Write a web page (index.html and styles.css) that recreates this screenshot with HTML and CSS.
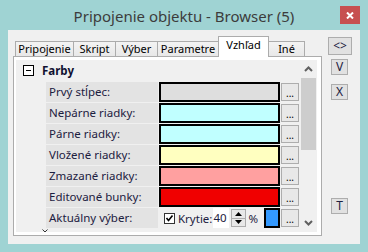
FILE: index.html
```html
<!DOCTYPE html>
<html>
<head>
<meta charset="utf-8">
<link rel="stylesheet" href="styles.css">
</head>
<body>
<div class="window">
  <div class="titlebar">
    <span class="title">Pripojenie objektu - Browser (5)</span>
    <div class="close">
      <svg width="8" height="7" viewBox="0 0 8 7"><path d="M1 0.5 L7 6.5 M7 0.5 L1 6.5" stroke="#fff" stroke-width="2"/></svg>
    </div>
  </div>
  <div class="client">
    <div class="tabctl">
      <div class="tabstrip">
        <div class="tab w1">Pripojenie</div>
        <div class="tab w2">Skript</div>
        <div class="tab w3">Výber</div>
        <div class="tab w4">Parametre</div>
        <div class="tab active w5">Vzhľad</div>
        <div class="tab w6">Iné</div>
      </div>
      <div class="page">
        <div class="grid">
          <div class="cat">
            <span class="minus"><svg width="9" height="9" viewBox="0 0 9 9"><path d="M2 4.5 H7" stroke="#000" stroke-width="1"/></svg></span>
            <span class="cat-name">Farby</span>
          </div>
          <div class="row">
            <div class="label">Prvý stĺpec:</div>
            <div class="value"><div class="swatch c-gray"></div><div class="dots">...</div></div>
          </div>
          <div class="row">
            <div class="label">Nepárne riadky:</div>
            <div class="value"><div class="swatch c-cyan"></div><div class="dots">...</div></div>
          </div>
          <div class="row">
            <div class="label">Párne riadky:</div>
            <div class="value"><div class="swatch c-cyan"></div><div class="dots">...</div></div>
          </div>
          <div class="row">
            <div class="label">Vložené riadky:</div>
            <div class="value"><div class="swatch c-yellow"></div><div class="dots">...</div></div>
          </div>
          <div class="row">
            <div class="label">Zmazané riadky:</div>
            <div class="value"><div class="swatch c-pink"></div><div class="dots">...</div></div>
          </div>
          <div class="row">
            <div class="label">Editované bunky:</div>
            <div class="value"><div class="swatch c-red"></div><div class="dots">...</div></div>
          </div>
          <div class="row">
            <div class="label">Aktuálny výber:</div>
            <div class="value sel">
              <span class="check"><svg width="9" height="9" viewBox="0 0 9 9"><path d="M1.5 4 L3.5 6.5 L7.5 1.5" stroke="#000" stroke-width="1.6" fill="none"/></svg></span>
              <span class="kry">Krytie:</span>
              <span class="num">40</span>
              <span class="spin">
                <span class="sp"><svg width="7" height="4" viewBox="0 0 7 4"><path d="M0 4 L3.5 0 L7 4 Z" fill="#000"/></svg></span>
                <span class="sp"><svg width="7" height="4" viewBox="0 0 7 4"><path d="M0 0 L3.5 4 L7 0 Z" fill="#000"/></svg></span>
              </span>
              <span class="pct">%</span>
              <div class="swatch small c-blue"></div>
              <div class="dots">...</div>
            </div>
          </div>
          <div class="partial">
            <svg width="6" height="4" viewBox="0 0 6 4"><path d="M0.5 0.5 L3 3 L5.5 0.5" stroke="#333" stroke-width="1" fill="none"/></svg>
          </div>
        </div>
        <div class="scrollbar">
          <div class="arrow"><svg width="9" height="6" viewBox="0 0 9 6"><path d="M1 5 L4.5 1.5 L8 5" stroke="#606060" stroke-width="2" fill="none"/></svg></div>
          <div class="thumb"></div>
          <div class="track"></div>
          <div class="arrow down"><svg width="9" height="6" viewBox="0 0 9 6"><path d="M1 1 L4.5 4.5 L8 1" stroke="#606060" stroke-width="2" fill="none"/></svg></div>
        </div>
      </div>
    </div>
    <div class="side">
      <div class="btn wide">&lt;&gt;</div>
      <div class="btn b-v">V</div>
      <div class="btn b-x">X</div>
      <div class="btn b-t">T</div>
    </div>
  </div>
</div>
</body>
</html>
```

FILE: styles.css
```css
html, body {
  margin: 0;
  padding: 0;
}
body {
  width: 368px;
  height: 252px;
  overflow: hidden;
  background: #9fd3d3;
  font-family: "Noto Sans", "DejaVu Sans", sans-serif;
  color: #000;
}
.window {
  width: 368px;
  height: 252px;
  box-sizing: border-box;
  padding: 0 8px 8px 8px;
  display: flex;
  flex-direction: column;
}
.titlebar {
  height: 30px;
  flex: none;
  position: relative;
  display: flex;
  align-items: center;
  justify-content: center;
}
.title {
  font-size: 15px;
  color: #3c3c3c;
  margin-top: 2px;
}
.close {
  position: absolute;
  right: 0;
  top: 6px;
  width: 20px;
  height: 18px;
  background: #c75050;
  display: flex;
  align-items: center;
  justify-content: center;
}
.client {
  flex: 1;
  background: #f0f0f0;
  display: flex;
}
.tabctl {
  margin-left: 5px;
  width: 309px;
  padding-top: 6px;
  display: flex;
  flex-direction: column;
}
.tabstrip {
  height: 20px;
  display: flex;
  align-items: flex-end;
  padding-left: 2px;
  position: relative;
  z-index: 1;
}
.tab {
  box-sizing: border-box;
  height: 15px;
  border: 1px solid #acacac;
  border-bottom: none;
  margin-left: -1px;
  background: linear-gradient(#f3f3f3, #e8e8e8);
  font-size: 11px;
  line-height: 13px;
  text-align: center;
}
.tab.w1 { width: 59px; margin-left: 0; }
.tab.w2 { width: 43px; }
.tab.w3 { width: 43px; }
.tab.w4 { width: 62px; }
.tab.w5 { width: 51px; }
.tab.w6 { width: 37px; }
.tab.active {
  height: 21px;
  margin-bottom: -1px;
  background: #fff;
  line-height: 16px;
  position: relative;
  z-index: 2;
}
.page {
  height: 180px;
  box-sizing: border-box;
  border: 1px solid #acacac;
  background: #fff;
  padding: 3px 4px 3px 2px;
  display: flex;
}
.grid {
  flex: 1;
  background: #f0f0f0;
  overflow: hidden;
  font-size: 11.5px;
  color: #1c2040;
}
.cat {
  height: 21px;
  display: flex;
  align-items: center;
}
.minus {
  margin-left: 7px;
  width: 11px;
  height: 11px;
  box-sizing: border-box;
  border: 1px solid #000;
  background: #fff;
  display: flex;
}
.cat-name {
  margin-left: 8px;
  font-weight: bold;
  color: #101030;
}
.row {
  display: flex;
  height: 20px;
  margin-top: 1px;
  padding-left: 30px;
}
.label {
  width: 112px;
  background: #e3e3e3;
  padding-left: 3px;
  box-sizing: border-box;
  line-height: 20px;
  white-space: nowrap;
}
.value {
  width: 141px;
  margin-left: 1px;
  display: flex;
  align-items: center;
}
.swatch {
  width: 121px;
  height: 20px;
  box-sizing: border-box;
  border: 2px solid #000;
}
.swatch.small { width: 16px; margin-left: 6px; }
.c-gray { background: #dedede; }
.c-cyan { background: #c0ffff; }
.c-yellow { background: #ffffc0; }
.c-pink { background: #ffa0a0; }
.c-red { background: #f00000; }
.c-blue { background: #3399ff; }
.dots {
  width: 18px;
  height: 18px;
  box-sizing: border-box;
  margin-left: 1px;
  border: 1px solid #adadad;
  background: #e8e8e8;
  font-size: 10px;
  line-height: 18px;
  text-align: center;
  color: #000;
}
.value.sel {
  padding-left: 5px;
  box-sizing: border-box;
  color: #1c2040;
}
.check {
  width: 11px;
  height: 11px;
  box-sizing: border-box;
  border: 1px solid #333;
  background: #fff;
  display: flex;
  align-items: center;
  justify-content: center;
}
.kry { margin-left: 3px; }
.num {
  margin-left: 1px;
  width: 16px;
  height: 20px;
  background: #fff;
  line-height: 20px;
}
.spin {
  margin-left: 2px;
  width: 15px;
  height: 18px;
  display: flex;
  flex-direction: column;
}
.sp {
  flex: 1;
  border: 1px solid #adadad;
  background: #e8e8e8;
  display: flex;
  align-items: center;
  justify-content: center;
}
.sp + .sp { border-top: none; }
.pct { margin-left: 2px; }
.partial {
  height: 6px;
  margin-top: 1px;
  padding-left: 26px;
  display: flex;
  align-items: flex-start;
}
.scrollbar {
  width: 17px;
  background: #f0f0f0;
  display: flex;
  flex-direction: column;
  align-items: center;
}
.arrow {
  height: 18px;
  display: flex;
  align-items: center;
  justify-content: center;
}
.arrow.down {
  height: 12px;
  align-items: flex-start;
}
.thumb {
  width: 15px;
  height: 72px;
  background: #cdcdcd;
}
.track { flex: 1; }
.side {
  flex: 1;
  padding-top: 7px;
  padding-left: 6px;
  display: flex;
  flex-direction: column;
  align-items: flex-start;
}
.btn {
  box-sizing: border-box;
  width: 17px;
  height: 16px;
  border: 1px solid #adadad;
  background: #e1e1e1;
  font-size: 12px;
  line-height: 14px;
  text-align: center;
  color: #1c2040;
}
.btn.wide { width: 24px; height: 18px; line-height: 16px; }
.b-v { margin-left: 3px; margin-top: 4px; }
.b-x { margin-left: 3px; margin-top: 9px; }
.b-t { margin-left: 3px; margin-top: 98px; }
```
